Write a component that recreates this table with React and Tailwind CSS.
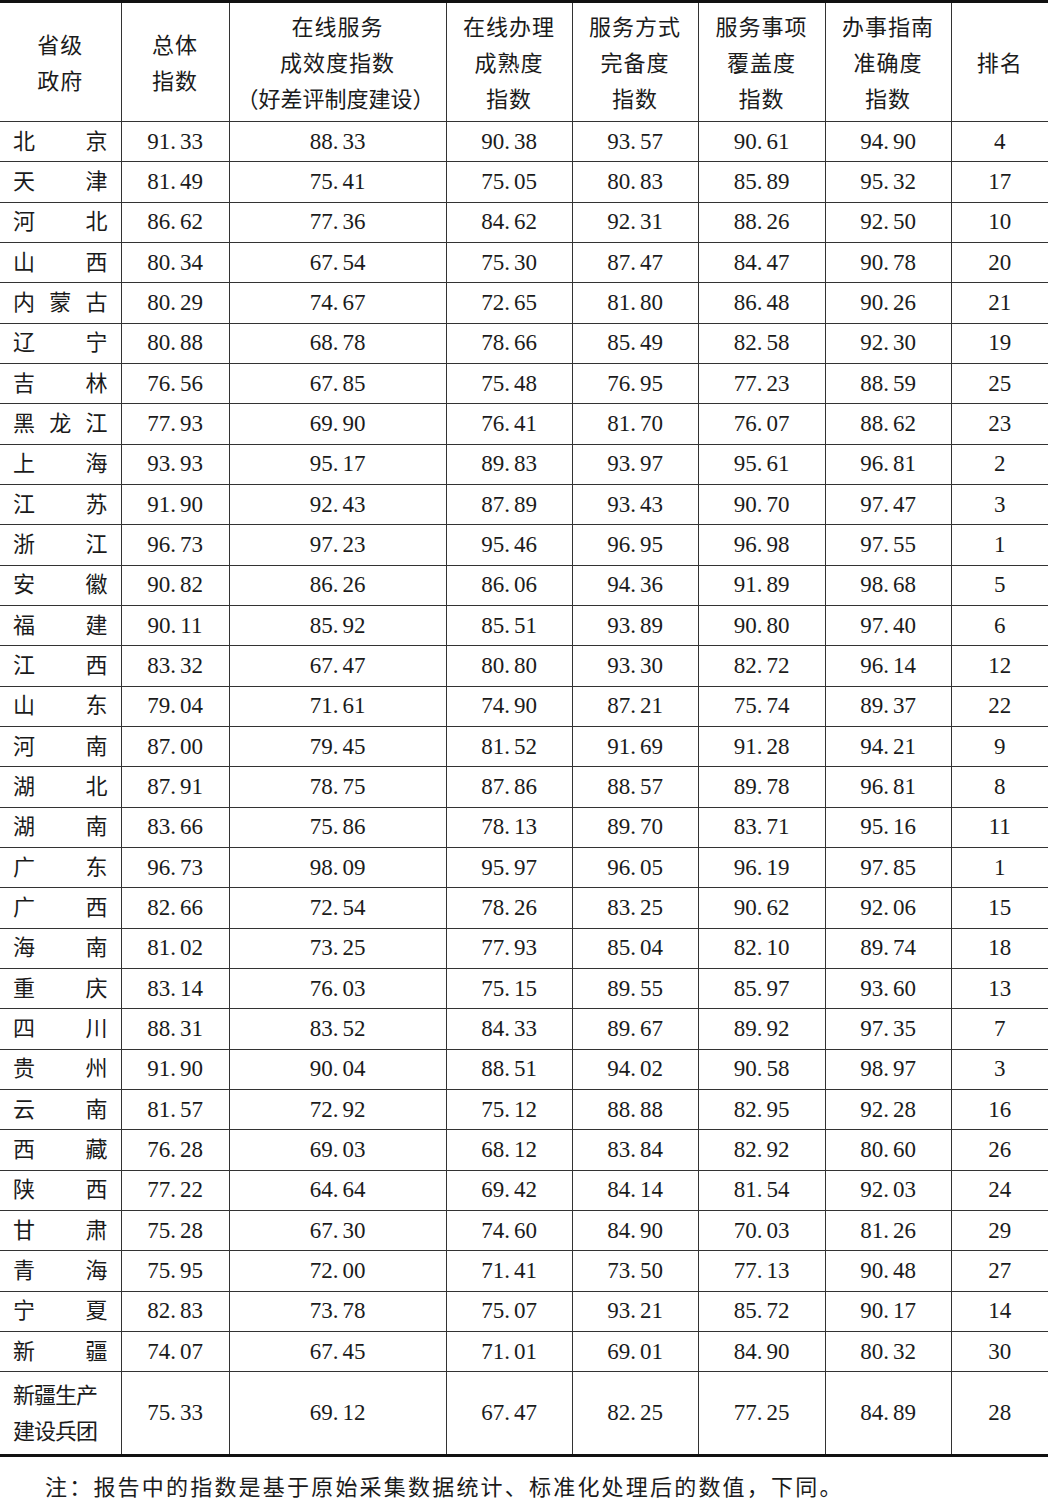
import React from 'react';

const rows = [
  ['北京', '91.33', '88.33', '90.38', '93.57', '90.61', '94.90', '4'],
  ['天津', '81.49', '75.41', '75.05', '80.83', '85.89', '95.32', '17'],
  ['河北', '86.62', '77.36', '84.62', '92.31', '88.26', '92.50', '10'],
  ['山西', '80.34', '67.54', '75.30', '87.47', '84.47', '90.78', '20'],
  ['内蒙古', '80.29', '74.67', '72.65', '81.80', '86.48', '90.26', '21'],
  ['辽宁', '80.88', '68.78', '78.66', '85.49', '82.58', '92.30', '19'],
  ['吉林', '76.56', '67.85', '75.48', '76.95', '77.23', '88.59', '25'],
  ['黑龙江', '77.93', '69.90', '76.41', '81.70', '76.07', '88.62', '23'],
  ['上海', '93.93', '95.17', '89.83', '93.97', '95.61', '96.81', '2'],
  ['江苏', '91.90', '92.43', '87.89', '93.43', '90.70', '97.47', '3'],
  ['浙江', '96.73', '97.23', '95.46', '96.95', '96.98', '97.55', '1'],
  ['安徽', '90.82', '86.26', '86.06', '94.36', '91.89', '98.68', '5'],
  ['福建', '90.11', '85.92', '85.51', '93.89', '90.80', '97.40', '6'],
  ['江西', '83.32', '67.47', '80.80', '93.30', '82.72', '96.14', '12'],
  ['山东', '79.04', '71.61', '74.90', '87.21', '75.74', '89.37', '22'],
  ['河南', '87.00', '79.45', '81.52', '91.69', '91.28', '94.21', '9'],
  ['湖北', '87.91', '78.75', '87.86', '88.57', '89.78', '96.81', '8'],
  ['湖南', '83.66', '75.86', '78.13', '89.70', '83.71', '95.16', '11'],
  ['广东', '96.73', '98.09', '95.97', '96.05', '96.19', '97.85', '1'],
  ['广西', '82.66', '72.54', '78.26', '83.25', '90.62', '92.06', '15'],
  ['海南', '81.02', '73.25', '77.93', '85.04', '82.10', '89.74', '18'],
  ['重庆', '83.14', '76.03', '75.15', '89.55', '85.97', '93.60', '13'],
  ['四川', '88.31', '83.52', '84.33', '89.67', '89.92', '97.35', '7'],
  ['贵州', '91.90', '90.04', '88.51', '94.02', '90.58', '98.97', '3'],
  ['云南', '81.57', '72.92', '75.12', '88.88', '82.95', '92.28', '16'],
  ['西藏', '76.28', '69.03', '68.12', '83.84', '82.92', '80.60', '26'],
  ['陕西', '77.22', '64.64', '69.42', '84.14', '81.54', '92.03', '24'],
  ['甘肃', '75.28', '67.30', '74.60', '84.90', '70.03', '81.26', '29'],
  ['青海', '75.95', '72.00', '71.41', '73.50', '77.13', '90.48', '27'],
  ['宁夏', '82.83', '73.78', '75.07', '93.21', '85.72', '90.17', '14'],
  ['新疆', '74.07', '67.45', '71.01', '69.01', '84.90', '80.32', '30'],
];

const headers = [
  ['省级', '政府'],
  ['总体', '指数'],
  ['在线服务', '成效度指数', '（好差评制度建设）'],
  ['在线办理', '成熟度', '指数'],
  ['服务方式', '完备度', '指数'],
  ['服务事项', '覆盖度', '指数'],
  ['办事指南', '准确度', '指数'],
  ['排名'],
];

const widths = ['w-[121px]', 'w-[108px]', 'w-[217px]', 'w-[126px]', 'w-[126px]', 'w-[127px]', 'w-[126px]', 'w-[97px]'];

// number with the wide gap after the decimal point, as in the print
function Num({ value }) {
  if (!value.includes('.')) return <span>{value}</span>;
  const [a, b] = value.split('.');
  return (
    <span>
      {a}.<span className="ml-[4px]">{b}</span>
    </span>
  );
}

function Region({ name }) {
  return (
    <div className="flex justify-between">
      {name.split('').map((c, i) => (
        <span key={i}>{c}</span>
      ))}
    </div>
  );
}

export default function App() {
  return (
    <div
      className="w-[1048px] bg-white text-[#1b1b1b] text-[22px]"
      style={{ fontFamily: '"Liberation Serif", "Noto Sans CJK SC", serif' }}
    >
      <table className="w-[1048px] table-fixed border-collapse border-t-[3px] border-b-[3px] border-[#111]">
        <colgroup>
          {widths.map((w, i) => (
            <col key={i} className={w} />
          ))}
        </colgroup>
        <thead>
          <tr className="h-[120px]">
            {headers.map((lines, i) => (
              <th
                key={i}
                className={`font-normal text-center align-middle pt-[4px] leading-[36px] tracking-[1px] border-b border-[#333] ${i > 0 ? 'border-l' : ''}`}
              >
                {lines.map((l, j) => (
                  <div key={j} className={i === 2 && j === 2 ? 'tracking-[0px] -ml-[4px]' : ''}>
                    {l}
                  </div>
                ))}
              </th>
            ))}
          </tr>
        </thead>
        <tbody>
          {rows.map((r) => (
            <tr key={r[0]} className="h-[40.33px]">
              <td className="px-[13px] border-b border-[#333] leading-[24px]">
                <Region name={r[0]} />
              </td>
              {r.slice(1).map((v, i) => (
                <td key={i} className="text-center text-[23px] border-b border-l border-[#333] leading-[24px]">
                  <Num value={v} />
                </td>
              ))}
            </tr>
          ))}
          <tr className="h-[84px]">
            <td className="pl-[13px] pt-[2px] leading-[36px] tracking-[-1px]">
              <div>新疆生产</div>
              <div>建设兵团</div>
            </td>
            {['75.33', '69.12', '67.47', '82.25', '77.25', '84.89', '28'].map((v, i) => (
              <td key={i} className="text-center text-[23px] border-l border-[#333]">
                <Num value={v} />
              </td>
            ))}
          </tr>
        </tbody>
      </table>
      <p className="pl-[45px] pt-[16px] pb-[11px] leading-[30px] tracking-[2.2px]">
        注：报告中的指数是基于原始采集数据统计、标准化处理后的数值，下同。
      </p>
    </div>
  );
}
